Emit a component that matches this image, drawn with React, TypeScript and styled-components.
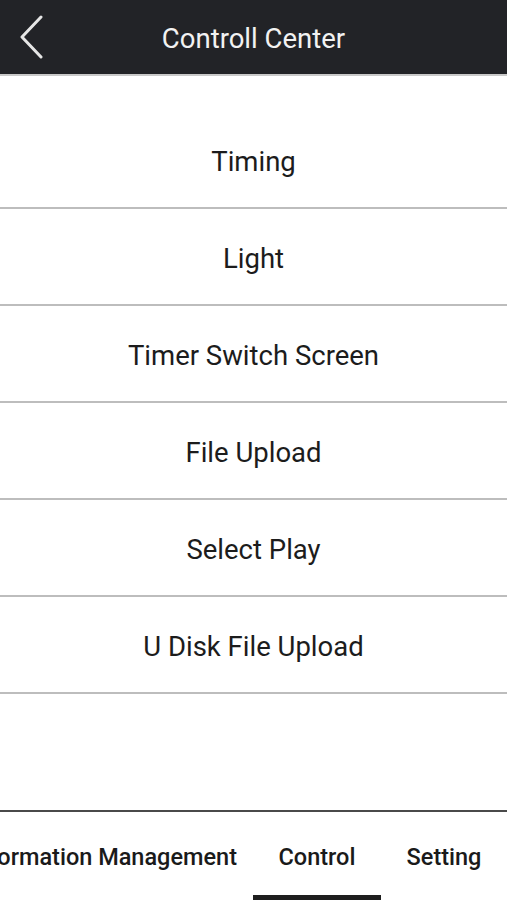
import React from "react";
import styled, { createGlobalStyle } from "styled-components";

const Global = createGlobalStyle`
  html, body { margin: 0; padding: 0; background: #ffffff; }
  body { font-family: Roboto, "Noto Sans", "Liberation Sans", sans-serif; }
  * { box-sizing: border-box; }
`;

const Screen = styled.div`
  width: 507px;
  height: 900px;
  display: flex;
  flex-direction: column;
  background: #ffffff;
  overflow: hidden;
`;

const Header = styled.header`
  height: 76px;
  flex-shrink: 0;
  background: #222327;
  border-bottom: 2px solid #c9c9c9;
  display: grid;
  grid-template-columns: 76px 1fr 76px;
  align-items: center;
`;

const BackButton = styled.button`
  background: none;
  border: none;
  padding: 0 0 0 19px;
  height: 100%;
  display: flex;
  align-items: center;
  cursor: pointer;
`;

const Title = styled.h1`
  margin: 0;
  padding-top: 3px;
  text-align: center;
  color: #f2f2f2;
  font-size: 27.5px;
  font-weight: 400;
`;

const Menu = styled.ul`
  list-style: none;
  margin: 0;
  padding: 36px 0 0;
  flex: 1;
`;

const MenuItem = styled.li`
  height: 97px;
  display: flex;
  align-items: center;
  justify-content: center;
  border-bottom: 2px solid #bdbdbd;
  font-size: 27.5px;
  color: #1c1c1c;
  padding-top: 4px;
`;

const TabBar = styled.nav`
  height: 90px;
  flex-shrink: 0;
  border-top: 2px solid #4a4a4a;
  display: flex;
  justify-content: flex-end;
  overflow: hidden;
`;

const Tab = styled.div<{ $width?: number; $active?: boolean }>`
  flex-shrink: 0;
  width: ${(p) => (p.$width ? `${p.$width}px` : "auto")};
  padding: ${(p) => (p.$width ? "6px 0 0" : "6px 16px 0 0")};
  display: flex;
  align-items: center;
  justify-content: center;
  font-size: 23.5px;
  font-weight: 500;
  color: #1a1a1a;
  white-space: nowrap;
  border-bottom: 5px solid ${(p) => (p.$active ? "#1e1e1e" : "transparent")};
`;

const items = [
  "Timing",
  "Light",
  "Timer Switch Screen",
  "File Upload",
  "Select Play",
  "U Disk File Upload",
];

export default function App() {
  return (
    <Screen>
      <Global />
      <Header>
        <BackButton aria-label="Back">
          <svg width="26" height="44" viewBox="0 0 26 44">
            <path
              d="M22 2 L3 22 L22 42"
              fill="none"
              stroke="#e6e6e6"
              strokeWidth="3"
              strokeLinecap="round"
              strokeLinejoin="round"
            />
          </svg>
        </BackButton>
        <Title>Controll Center</Title>
        <div />
      </Header>
      <Menu>
        {items.map((t) => (
          <MenuItem key={t}>{t}</MenuItem>
        ))}
      </Menu>
      <TabBar>
        <Tab>Information Management</Tab>
        <Tab $width={128} $active>
          Control
        </Tab>
        <Tab $width={126}>Setting</Tab>
      </TabBar>
    </Screen>
  );
}
